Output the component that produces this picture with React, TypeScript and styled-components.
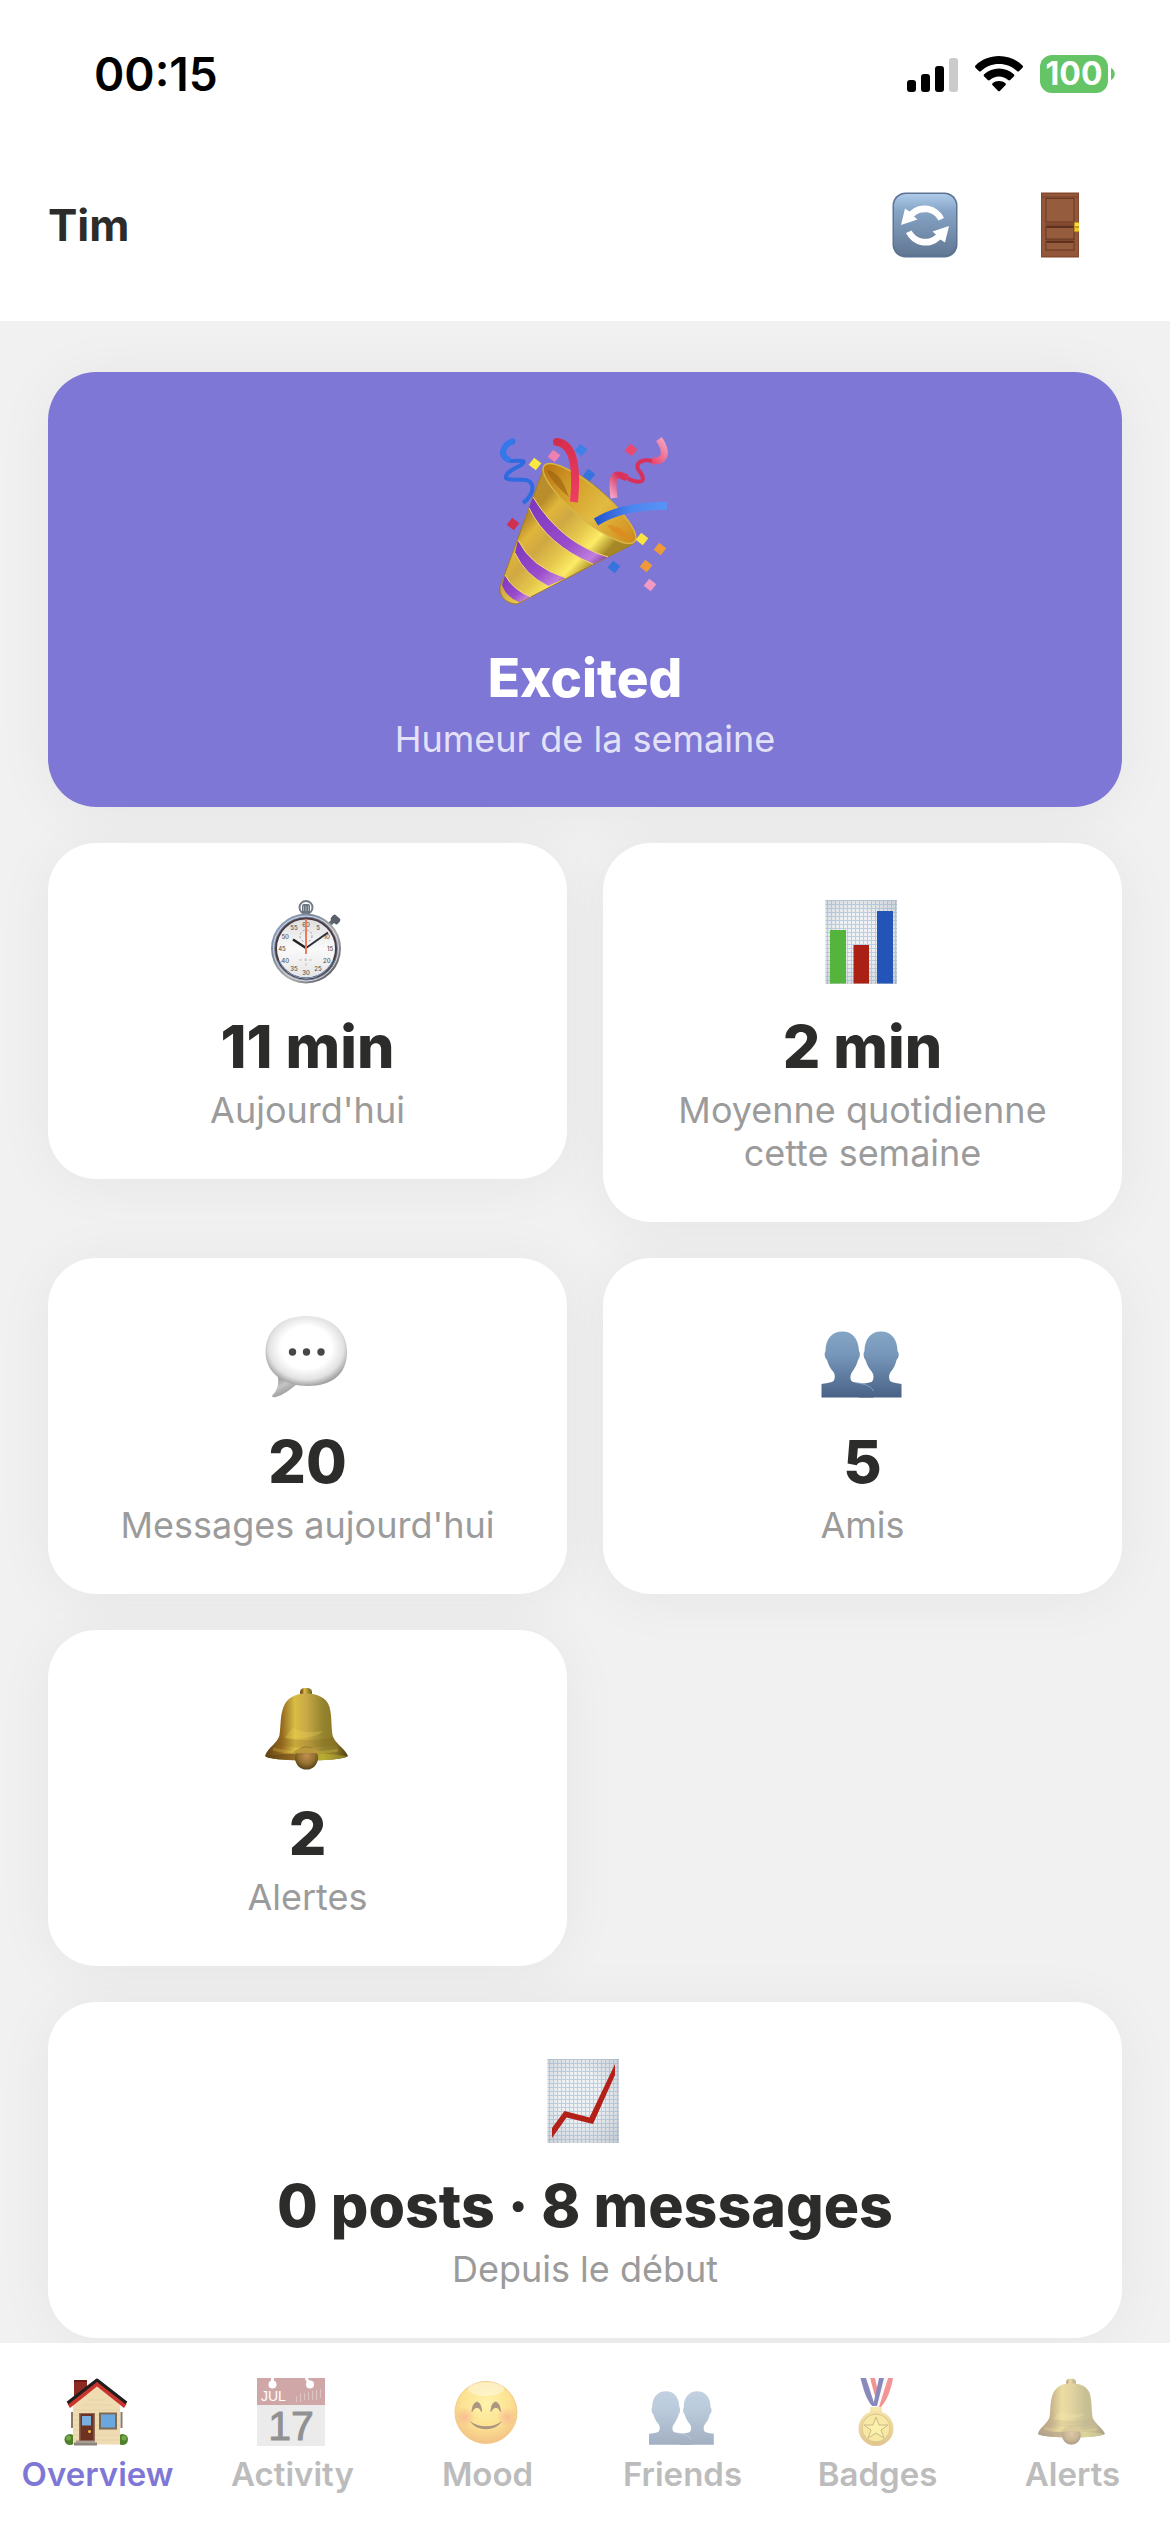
import React from "react";
import styled, { createGlobalStyle } from "styled-components";

type Stat = {
    icon: React.ReactNode;
    value: string;
    label: string;
    wide?: boolean;
};

type Tab = {
    icon: React.ReactNode;
    label: string;
};

const GlobalStyle = createGlobalStyle`
    * {
        box-sizing: border-box;
    }
    body {
        margin: 0;
        background: #f1f1f1;
        color: #2c2c2a;
        font-family: Inter, "Noto Sans", sans-serif;
    }
    h1, h2, p {
        margin: 0;
    }
    svg {
        display: block;
        overflow: visible;
    }
`;

// gradients and patterns used by more than one icon
const SharedDefs: React.FC = () => (
    <HiddenSvg aria-hidden="true">
        <defs>
            <linearGradient id="silhouette" x1="0" y1="0" x2="0" y2="1">
                <stop offset="0" stopColor="#85a5c6" />
                <stop offset="0.35" stopColor="#7797ba" />
                <stop offset="1" stopColor="#486286" />
            </linearGradient>
            <linearGradient id="bellBody" x1="0" y1="0" x2="1" y2="0">
                <stop offset="0" stopColor="#5e4012" />
                <stop offset="0.2" stopColor="#94691f" />
                <stop offset="0.36" stopColor="#d9bd45" />
                <stop offset="0.5" stopColor="#c8a945" />
                <stop offset="0.7" stopColor="#94842e" />
                <stop offset="0.85" stopColor="#8b7726" />
                <stop offset="1" stopColor="#4f3f14" />
            </linearGradient>
            <linearGradient id="bellRim" x1="0" y1="0" x2="1" y2="0">
                <stop offset="0" stopColor="#5f3f16" />
                <stop offset="0.35" stopColor="#8f6b24" />
                <stop offset="0.7" stopColor="#b8ae34" />
                <stop offset="1" stopColor="#8b7a22" />
            </linearGradient>
            <radialGradient id="bellClapper" cx="0.5" cy="0.4" r="0.6">
                <stop offset="0" stopColor="#c08f52" />
                <stop offset="0.6" stopColor="#94702e" />
                <stop offset="1" stopColor="#55401a" />
            </radialGradient>
            <pattern id="graphPaper" width="4" height="4" patternUnits="userSpaceOnUse">
                <rect width="4" height="4" fill="#eef0f1" />
                <path d="M0 0.5H4M0.5 0V4" stroke="#bccfe2" strokeWidth="1" />
            </pattern>
            <radialGradient id="paperShade" cx="0.45" cy="0.45" r="0.75">
                <stop offset="0.4" stopColor="#8a98a8" stopOpacity="0" />
                <stop offset="1" stopColor="#8a98a8" stopOpacity="0.4" />
            </radialGradient>
        </defs>
    </HiddenSvg>
);

const RefreshIcon: React.FC = () => (
    <svg width="66" height="66" viewBox="0 0 66 66" aria-hidden="true">
        <defs>
            <linearGradient id="refreshTile" x1="0" y1="0" x2="0" y2="1">
                <stop offset="0" stopColor="#aecbea" />
                <stop offset="0.28" stopColor="#86a4c6" />
                <stop offset="1" stopColor="#627894" />
            </linearGradient>
        </defs>
        <rect x="0.5" y="0.5" width="65" height="65" rx="13" fill="#5d7391" />
        <rect x="2" y="2" width="62" height="61" rx="12" fill="url(#refreshTile)" />
        <g fill="#fff">
            <path d="M52 26A21.5 21.5 0 0 0 17.5 19.5L13 16.5L9 33L25.500 27.500L22 24.500A15.500 15.500 0 0 1 46.500 28.500Z" />
            <path
                d="M52 26A21.5 21.5 0 0 0 17.5 19.5L13 16.5L9 33L25.500 27.500L22 24.500A15.500 15.500 0 0 1 46.500 28.500Z"
                transform="rotate(180 33 33.5)"
            />
        </g>
    </svg>
);

const DoorIcon: React.FC = () => (
    <svg width="66" height="66" viewBox="0 0 66 66" aria-hidden="true">
        <rect x="14" y="0.5" width="38" height="65" fill="#85492e" />
        <rect x="15" y="2" width="36" height="62" fill="#935739" />
        <g fill="#965c3e" stroke="#6a3822" strokeWidth="1">
            <rect x="19" y="6.500" width="28" height="23.500" />
            <rect x="19" y="34" width="28" height="13" />
            <rect x="19" y="49" width="28" height="9" />
        </g>
        <path d="M15 5H51M18 32H48M18 47.500H48" stroke="#73402a" strokeWidth="1" />
        <path d="M19.500 35H46.500M19.500 50H46.500" stroke="#5e301d" strokeWidth="2" />
        <rect x="47" y="30" width="5" height="10" rx="1" fill="#c9971d" />
        <rect x="48" y="31" width="4" height="3" fill="#f4e04a" />
        <rect x="48" y="36" width="4" height="3" fill="#eacb35" />
    </svg>
);

const confetti = [
    { x: 36, y: 27, fill: "#fbe83c" },
    { x: 55, y: 19, fill: "#ee7fb0" },
    { x: 82, y: 13, fill: "#3f7fe8" },
    { x: 90, y: 38, fill: "#3474dc" },
    { x: 132, y: 13, fill: "#ea4a70" },
    { x: 14, y: 87, fill: "#cf304d" },
    { x: 143, y: 102, fill: "#f9e441" },
    { x: 161, y: 112, fill: "#ef9a3a" },
    { x: 147, y: 129, fill: "#ef9a3a" },
    { x: 115, y: 130, fill: "#3474dc" },
    { x: 151, y: 148, fill: "#f09ac5" },
];

const PartyIcon: React.FC = () => (
    <svg width="172" height="168" viewBox="0 0 172 168" aria-hidden="true">
        <defs>
            <linearGradient id="cone" gradientUnits="userSpaceOnUse" x1="25" y1="85" x2="85" y2="140">
                <stop offset="0" stopColor="#b98d2c" />
                <stop offset="0.15" stopColor="#e0b63a" />
                <stop offset="0.35" stopColor="#d0a843" />
                <stop offset="0.6" stopColor="#e6c84c" />
                <stop offset="0.8" stopColor="#fdec66" />
                <stop offset="1" stopColor="#a58726" />
            </linearGradient>
            <linearGradient id="coneMouth" x1="0" y1="0" x2="1" y2="0">
                <stop offset="0" stopColor="#b97512" />
                <stop offset="0.3" stopColor="#d3a02a" />
                <stop offset="0.6" stopColor="#e2bb42" />
                <stop offset="1" stopColor="#cf8a1c" />
            </linearGradient>
            <linearGradient id="stripe" x1="0" y1="0" x2="1" y2="1">
                <stop offset="0" stopColor="#7a35bd" />
                <stop offset="0.6" stopColor="#9a4ccb" />
                <stop offset="0.85" stopColor="#c07fdc" />
                <stop offset="1" stopColor="#6b2a94" />
            </linearGradient>
            <linearGradient id="redRibbon" x1="0" y1="0" x2="0" y2="1">
                <stop offset="0" stopColor="#d92f4f" />
                <stop offset="1" stopColor="#ef3d63" />
            </linearGradient>
            <linearGradient id="blueRibbon" x1="0" y1="0" x2="1" y2="0">
                <stop offset="0" stopColor="#2455cf" />
                <stop offset="0.5" stopColor="#4c86ef" />
                <stop offset="1" stopColor="#5a93f5" />
            </linearGradient>
            <linearGradient id="pinkRibbon" x1="0" y1="1" x2="1" y2="0">
                <stop offset="0" stopColor="#f3a6c6" />
                <stop offset="0.25" stopColor="#d8305a" />
                <stop offset="0.7" stopColor="#e84a72" />
                <stop offset="1" stopColor="#f5a3c2" />
            </linearGradient>
        </defs>
        <path
            d="M16 4C2 6 -2 22 12 24C24 23 28 24 22 28C14 32 6 36 7 41C14 46 30 38 33 48C35 54 30 62 24 66"
            fill="none"
            stroke="#2f6be0"
            strokeWidth="4"
        />
        <path d="M15 4C3 7 0 20 11 23" fill="none" stroke="#3478ea" strokeWidth="6" />
        <path
            d="M46 28L1 150C0 160 8 167 18 167L134 107C138 104 135 96 130 86C112 56 66 22 46 28Z"
            fill="url(#cone)"
            stroke="#a37b24"
            strokeWidth="1"
        />
        <path d="M34 60Q62 106 109 120L94 127Q48 108 30 71Z" fill="url(#stripe)" />
        <path d="M19 103Q32 130 67 141L49 149Q26 138 16 116Z" fill="url(#stripe)" />
        <path d="M6 138Q14 153 32 160L20 165Q7 160 3 148Z" fill="url(#stripe)" />
        <path
            d="M34 60Q62 106 109 120M30 71Q48 108 94 127M19 103Q32 130 67 141M16 116Q26 138 49 149M6 138Q14 153 32 160"
            fill="none"
            stroke="#f0d97a"
            strokeWidth="1"
        />
        <ellipse
            cx="90.500"
            cy="66.500"
            rx="59"
            ry="16"
            transform="rotate(40 90.5 66.5)"
            fill="url(#coneMouth)"
            stroke="#d9b545"
            strokeWidth="1.500"
        />
        <path d="M50 33C60 37 64 44 70 60C58 50 50 40 48 33Z" fill="#9a5f10" opacity="0.6" />
        <path d="M108 88C118 88 126 94 132 102C124 102 114 96 108 88Z" fill="#e0871f" opacity="0.7" />
        <path d="M57 5C76 6 78 34 75 65" fill="none" stroke="url(#redRibbon)" strokeWidth="8" />
        <circle cx="58" cy="5" r="4" fill="#cf2f4c" />
        <path d="M97 85Q124 68 168 69" fill="none" stroke="url(#blueRibbon)" strokeWidth="8" />
        <path
            d="M154 24C140 21 135 28 141 35C149 46 139 47 128 41"
            fill="none"
            stroke="#d8305a"
            strokeWidth="4"
        />
        <path
            d="M160 2C168 14 168 25 153 24M128 41C112 32 113 44 115 61"
            fill="none"
            stroke="url(#pinkRibbon)"
            strokeWidth="7"
        />
        {confetti.map(({ x, y, fill }) => (
            <rect
                key={`${x}-${y}`}
                x={x - 4.5}
                y={y - 4.5}
                width="9"
                height="9"
                fill={fill}
                transform={`rotate(38 ${x} ${y})`}
            />
        ))}
    </svg>
);

const dialNumbers = [60, 5, 10, 15, 20, 25, 30, 35, 40, 45, 50, 55];

const StopwatchIcon: React.FC = () => (
    <svg width="88" height="84" viewBox="0 0 88 84" aria-hidden="true">
        <defs>
            <linearGradient id="watchCase" x1="0" y1="0" x2="1" y2="1">
                <stop offset="0" stopColor="#9fb4d2" />
                <stop offset="0.3" stopColor="#7d8698" />
                <stop offset="0.6" stopColor="#b3afaa" />
                <stop offset="1" stopColor="#3a3d48" />
            </linearGradient>
            <linearGradient id="watchFace" x1="0" y1="0" x2="0" y2="1">
                <stop offset="0" stopColor="#dedede" />
                <stop offset="0.5" stopColor="#fafafa" />
                <stop offset="1" stopColor="#e4e4e4" />
            </linearGradient>
        </defs>
        <circle cx="42" cy="7.500" r="6.500" fill="none" stroke="#737b86" strokeWidth="2" />
        <rect x="38" y="4" width="8" height="10" rx="2" fill="#6c7480" />
        <path d="M39.500 6V11M42 6V11M44.500 6V11" stroke="#aab2bc" strokeWidth="1" />
        <path d="M66 24L71 19" stroke="#5f6670" strokeWidth="4" />
        <rect x="67" y="16" width="9" height="7" rx="2" fill="#59606a" transform="rotate(42 71.500 19.500)" />
        <circle cx="42" cy="48.500" r="35" fill="url(#watchCase)" />
        <circle cx="42" cy="48.500" r="32.500" fill="none" stroke="#cbdcf4" strokeWidth="1" />
        <circle cx="42" cy="48.500" r="30" fill="url(#watchFace)" stroke="#4a3c44" strokeWidth="2" />
        <path d="M15 60A29 29 0 0 0 69 60" fill="none" stroke="#7ba2d8" strokeWidth="1" />
        {dialNumbers.map((n, i) => {
            const angle = (i * Math.PI) / 6;
            return (
                <DialNumber key={n} x={42 + 24 * Math.sin(angle)} y={50.5 - 24 * Math.cos(angle)}>
                    {n}
                </DialNumber>
            );
        })}
        <circle cx="42" cy="36" r="6" fill="none" stroke="#999" strokeWidth="1" strokeDasharray="2 2" />
        <path d="M35 60H49M42 58V66" stroke="#c4c4c4" strokeWidth="1" strokeDasharray="3 2" />
        <path d="M42 48L29 39.500" stroke="#222" strokeWidth="2.500" />
        <path d="M42 48L64 32.500" stroke="#2a303c" strokeWidth="2" />
        <path d="M42 19V54" stroke="#ee7a5c" strokeWidth="2" />
    </svg>
);

const BarChartIcon: React.FC = () => (
    <svg width="88" height="84" viewBox="0 0 88 84" aria-hidden="true">
        <rect x="6.500" y="0" width="71.500" height="84" fill="url(#graphPaper)" />
        <rect x="6.500" y="0" width="71.500" height="84" fill="url(#paperShade)" />
        <rect x="11" y="30" width="16" height="53.500" fill="#55b43c" />
        <rect x="34.500" y="45" width="15.500" height="38.500" fill="#ab2015" />
        <rect x="58" y="11" width="16" height="72.500" fill="#2355b8" />
    </svg>
);

const LineChartIcon: React.FC = () => (
    <svg width="88" height="84" viewBox="0 0 88 84" aria-hidden="true">
        <rect x="6.500" y="0" width="71.500" height="84" fill="url(#graphPaper)" />
        <rect x="6.500" y="0" width="71.500" height="84" fill="url(#paperShade)" />
        <path
            d="M11 69L23.500 52L48.500 58.500L74 5V16L52 65L25.500 58.500L11 79Z"
            fill="#b32017"
        />
    </svg>
);

const SpeechIcon: React.FC = () => (
    <svg width="88" height="84" viewBox="0 0 88 84" aria-hidden="true">
        <defs>
            <radialGradient id="bubble" cx="0.5" cy="0.45" r="0.56">
                <stop offset="0.55" stopColor="#fff" />
                <stop offset="0.82" stopColor="#e2e2e2" />
                <stop offset="1" stopColor="#9c9c9c" />
            </radialGradient>
            <linearGradient id="bubbleTail" x1="0" y1="0" x2="0.6" y2="1">
                <stop offset="0" stopColor="#7f7f7f" />
                <stop offset="0.5" stopColor="#c4c4c4" />
                <stop offset="1" stopColor="#8d8d8d" />
            </linearGradient>
        </defs>
        <path d="M14 61C15 70 13 76 8.500 80C7 82 9 82.500 12 82C19 80 26 75 33 69Z" fill="url(#bubbleTail)" />
        <path
            d="M42 1C66 1 83 15 83 37C83 59 68 71 44 71C20 71 1.500 58 1.500 37C1.500 15 18 1 42 1Z"
            fill="url(#bubble)"
        />
        <g fill="#474747">
            <circle cx="28.500" cy="37" r="3.700" />
            <circle cx="42.500" cy="37" r="3.700" />
            <circle cx="57" cy="37" r="3.700" />
        </g>
    </svg>
);

const PeopleIcon: React.FC<{ size?: number }> = ({ size = 84 }) => (
    <svg width={(size * 88) / 84} height={size} viewBox="0 0 88 84" aria-hidden="true">
        <path
            d="M62 16.500C72 16.500 78.500 24 78.500 36C80.500 38 80 43 77.500 45C76 52 73 55 71 58C69.500 61 70 64 71 66C74 68 79 68 82.500 69V82.500H40V69C46 68 52 68 53.500 66C55 63 55 60 53 57C50 53 48 50 46.500 45C44.500 43 44 38 45.500 36C45.500 24 52 16.500 62 16.500Z"
            fill="url(#silhouette)"
        />
        <path
            d="M23.500 16.500C33.500 16.500 39.500 24 40 36C41.500 38 41 43 39 45C37.500 51 35 54 32.500 58C31 61 31 64 32.500 66C36 69 49 67 54.500 76V82.500H2.500V69C6 68 12 68 14.500 66C16 64 16.500 60 14.500 57C11 53 9.500 50 8 45C5.500 43 5 38 6.500 36C6.500 24 13 16.500 23.500 16.500Z"
            fill="url(#silhouette)"
        />
        <path d="M38 68C46 69 52 71 54.500 76" fill="none" stroke="#7fa0c4" strokeWidth="1" />
    </svg>
);

const BellIcon: React.FC<{ size?: number }> = ({ size = 84 }) => (
    <svg width={(size * 88) / 84} height={size} viewBox="0 0 88 84" aria-hidden="true">
        <rect x="36" y="1" width="12" height="9" rx="4.500" fill="url(#bellBody)" />
        <path
            d="M42 6.500C54 6.500 63 11 65.500 20C68 29 67 38 68.500 48C70 56 80 60 84 69C80 75 4 75 1 69C4 60 14 56 15.500 48C17 38 16 29 19.500 20C23 11 31 6.500 42 6.500Z"
            fill="url(#bellBody)"
        />
        <path d="M15.500 50C28 54 56 54 69 50L74 57C56 62 28 62 10 57Z" fill="#7a5c18" opacity="0.2" />
        <path d="M21 51C24 46 27 42 30 41C34 45 50 46 60 44C52 51 34 53 21 51Z" fill="#f3e05c" opacity="0.25" />
        <path d="M9 62C26 67 56 67 74 63" fill="none" stroke="#f0d84e" strokeWidth="3" opacity="0.25" />
        <path d="M2 69.500C18 65 66 65 83 69.500C72 75 13 75 2 69.500Z" fill="url(#bellRim)" />
        <circle cx="42.500" cy="71" r="11.500" fill="url(#bellClapper)" />
        <path d="M27 67C36 58 49 58 58 67C50 65.500 35 65.500 27 67Z" fill="#b9993a" />
    </svg>
);

const HouseIcon: React.FC = () => (
    <svg width="71" height="68" viewBox="0 0 71 68" aria-hidden="true">
        <circle cx="8" cy="61.500" r="5.500" fill="#4f7f2a" />
        <circle cx="60.500" cy="61.500" r="5.500" fill="#4f7f2a" />
        <circle cx="6.500" cy="60" r="2.500" fill="#76a848" />
        <circle cx="62" cy="60" r="2.500" fill="#76a848" />
        <rect x="12" y="2" width="13" height="20" fill="#8f2a22" />
        <rect x="12" y="2" width="13" height="2" fill="#6b1c16" />
        <rect x="9" y="34" width="2" height="16" fill="#8c7a66" />
        <rect x="58.500" y="34" width="2" height="16" fill="#8c7a66" />
        <path d="M11 27L35 8L58 27V66.500H11Z" fill="#efdcb2" />
        <path d="M11 32H58M11 37H58M11 42H58M11 47H58M11 52H58M11 57H58M11 62H58M20 27H50M26 22H44" stroke="#e6d2a6" strokeWidth="1" />
        <path d="M5.500 26L35 2L64.500 26L62 30L35 8.500L8 30Z" fill="#c9352d" />
        <path d="M5.500 25L35 2L64.500 25" fill="none" stroke="#1f1d1d" strokeWidth="3" strokeLinejoin="round" />
        <rect x="17" y="35" width="16" height="29" fill="#8c6c55" />
        <rect x="18.500" y="36" width="13" height="28" fill="#6d3222" />
        <rect x="20" y="38" width="9" height="9.500" fill="#79b0e0" />
        <circle cx="27.500" cy="53.500" r="1.500" fill="#f0c23c" />
        <rect x="37" y="34.500" width="18" height="17" fill="#7d6a55" />
        <rect x="39" y="36.500" width="14" height="13" fill="#6ba7df" />
        <rect x="14" y="62.500" width="19" height="2" fill="#a39a90" />
        <rect x="12" y="64.500" width="23" height="3" fill="#8c857d" />
    </svg>
);

const CalendarIcon: React.FC = () => (
    <svg width="71" height="68" viewBox="0 0 71 68" aria-hidden="true">
        <rect x="0" y="0" width="68" height="68" fill="#d8d8d8" />
        <rect x="0" y="0" width="68" height="27" fill="#a25252" />
        <path d="M15.500 0V6M49 0L53 6" stroke="#fff" strokeWidth="3" />
        <circle cx="15.500" cy="6.500" r="4" fill="#fff" />
        <circle cx="53" cy="6.500" r="4" fill="#fff" />
        <CalendarMonth x="4" y="23">JUL</CalendarMonth>
        <path d="M39.500 18V24M43.500 15V24M47.500 15V22M51.500 14V22M55.500 13V22M59.500 12V22M63.500 11V20" stroke="#c18f8f" strokeWidth="1" />
        <CalendarDay x="34" y="62">17</CalendarDay>
    </svg>
);

const SmileIcon: React.FC = () => (
    <svg width="71" height="68" viewBox="0 0 71 68" aria-hidden="true">
        <defs>
            <radialGradient id="smileFace" cx="0.5" cy="0.35" r="0.65">
                <stop offset="0" stopColor="#ffe95c" />
                <stop offset="0.6" stopColor="#fac626" />
                <stop offset="1" stopColor="#e6860e" />
            </radialGradient>
            <radialGradient id="cheek">
                <stop offset="0" stopColor="#f2602a" stopOpacity="0.7" />
                <stop offset="1" stopColor="#f2602a" stopOpacity="0" />
            </radialGradient>
        </defs>
        <circle cx="34" cy="34.500" r="31" fill="url(#smileFace)" stroke="#e8981c" strokeWidth="1" />
        <ellipse cx="34" cy="11" rx="18" ry="7" fill="#fff" opacity="0.4" />
        <circle cx="13" cy="39" r="10" fill="url(#cheek)" />
        <circle cx="55" cy="39" r="10" fill="url(#cheek)" />
        <path d="M20 33.500C21 21 29 21 29.500 33.500C27 28 23 28 20 33.500Z" fill="#5c2f08" stroke="#5c2f08" />
        <path d="M39 33.500C39.500 21 47.500 21 48.500 33.500C46 28 42 28 39 33.500Z" fill="#5c2f08" stroke="#5c2f08" />
        <path d="M18 43C26 50 42 50 50 43C44 54 24 54 18 43Z" fill="#5c2f08" />
    </svg>
);

const MedalIcon: React.FC = () => (
    <svg width="71" height="68" viewBox="0 0 71 68" aria-hidden="true">
        <defs>
            <linearGradient id="medalDisc" x1="0" y1="0" x2="0" y2="1">
                <stop offset="0" stopColor="#ecc94e" />
                <stop offset="1" stopColor="#c88a20" />
            </linearGradient>
        </defs>
        <path d="M28 0H33L36 14L33 26Z" fill="#ea2a2a" />
        <path d="M23 0H28L34 22L32 28H31Z" fill="#fff" />
        <path d="M18.500 0H24L33 28H30C24 21 21 10 18.500 0Z" fill="#16167c" />
        <path d="M46 0H51C49 12 45 22 39 29H36Z" fill="#ea2a2a" />
        <path d="M42 0H46L37 29H33Z" fill="#f4f0f0" />
        <path d="M37 0H42L35 28H31Z" fill="#16167c" />
        <rect x="28" y="29" width="12" height="6" rx="1" fill="#f0d060" />
        <circle cx="34" cy="50.500" r="17.500" fill="url(#medalDisc)" />
        <circle cx="34" cy="50" r="14" fill="#f1d54a" stroke="#b8871e" strokeWidth="1" />
        <path
            d="M34 39L37 47H46L39 52L42 60L34 55L26 60L29 52L22 47H31Z"
            fill="#f8e45c"
            stroke="#9c7218"
            strokeWidth="1"
        />
    </svg>
);

const stats: Stat[] = [
    { icon: <StopwatchIcon />, value: "11 min", label: "Aujourd'hui" },
    { icon: <BarChartIcon />, value: "2 min", label: "Moyenne quotidienne cette semaine" },
    { icon: <SpeechIcon />, value: "20", label: "Messages aujourd'hui" },
    { icon: <PeopleIcon />, value: "5", label: "Amis" },
    { icon: <BellIcon />, value: "2", label: "Alertes" },
    { icon: <LineChartIcon />, value: "0 posts · 8 messages", label: "Depuis le début", wide: true },
];

const tabs: Tab[] = [
    { icon: <HouseIcon />, label: "Overview" },
    { icon: <CalendarIcon />, label: "Activity" },
    { icon: <SmileIcon />, label: "Mood" },
    { icon: <PeopleIcon size={68} />, label: "Friends" },
    { icon: <MedalIcon />, label: "Badges" },
    { icon: <BellIcon size={68} />, label: "Alerts" },
];

const StatusBar: React.FC = () => (
    <StatusWrapper>
        <Time>00:15</Time>
        <StatusIcons>
            <svg width="51" height="36" viewBox="0 0 51 36" aria-label="Signal">
                <rect x="0" y="24" width="9" height="12" rx="3" />
                <rect x="14" y="18" width="9" height="18" rx="3" />
                <rect x="28" y="10" width="9" height="26" rx="3" />
                <rect x="42" y="2" width="9" height="34" rx="3" fill="#cbcbcb" />
            </svg>
            <svg width="48" height="36" viewBox="0 0 48 36" aria-label="Wi-Fi">
                <path d="M24 0C33 0 41.500 3.500 47.500 9.500C48.200 10.200 48.200 11 47.500 11.700L44.200 15C43.500 15.700 42.700 15.700 42 15C37 10.500 31 8 24 8C17 8 11 10.500 6 15C5.300 15.700 4.500 15.700 3.800 15L0.500 11.700C-0.200 11 -0.200 10.200 0.500 9.500C6.500 3.500 15 0 24 0Z" />
                <path d="M24 12.500C29.500 12.500 34.700 14.600 38.800 18.200C39.500 18.900 39.500 19.700 38.800 20.400L35.200 24C34.500 24.700 33.800 24.600 33.100 24C30.500 21.900 27.500 20.600 24 20.600C20.500 20.600 17.500 21.900 14.900 24C14.200 24.600 13.500 24.700 12.800 24L9.200 20.400C8.500 19.700 8.500 18.900 9.200 18.200C13.300 14.600 18.500 12.500 24 12.500Z" />
                <path d="M24 25C26.600 25 28.700 25.900 30.400 27.300C31.100 27.900 31 28.700 30.400 29.300L25.100 34.700C24.400 35.400 23.600 35.400 22.900 34.700L17.600 29.300C17 28.700 16.900 27.900 17.600 27.300C19.300 25.900 21.400 25 24 25Z" />
            </svg>
            <Battery>
                <BatteryLevel>100</BatteryLevel>
                <svg width="4" height="12" viewBox="0 0 4 12" aria-hidden="true">
                    <path d="M0 0C5 2 5 10 0 12Z" fill="#65c466" />
                </svg>
            </Battery>
        </StatusIcons>
    </StatusWrapper>
);

const App: React.FC = () => {
    const [activeTab, setActiveTab] = React.useState("Overview");

    return (
        <Page>
            <GlobalStyle />
            <SharedDefs />
            <Header>
                <StatusBar />
                <TitleBar>
                    <UserName>Tim</UserName>
                    <Actions>
                        <IconButton type="button" aria-label="Refresh">
                            <RefreshIcon />
                        </IconButton>
                        <IconButton type="button" aria-label="Log out">
                            <DoorIcon />
                        </IconButton>
                    </Actions>
                </TitleBar>
            </Header>
            <Content>
                <MoodCard>
                    <PartyIcon />
                    <MoodTitle>Excited</MoodTitle>
                    <MoodLabel>Humeur de la semaine</MoodLabel>
                </MoodCard>
                {stats.map(({ icon, value, label, wide }) => (
                    <StatCard key={label} $wide={wide}>
                        {icon}
                        <StatValue>{value}</StatValue>
                        <StatLabel>{label}</StatLabel>
                    </StatCard>
                ))}
            </Content>
            <TabBar>
                {tabs.map(({ icon, label }) => (
                    <TabButton
                        key={label}
                        type="button"
                        $active={label === activeTab}
                        onClick={() => setActiveTab(label)}
                    >
                        {icon}
                        <span>{label}</span>
                    </TabButton>
                ))}
            </TabBar>
        </Page>
    );
};

const HiddenSvg = styled.svg`
    position: absolute;
    width: 0;
    height: 0;
`;

const DialNumber = styled.text`
    font-size: 6px;
    font-weight: 500;
    text-anchor: middle;
    fill: #555;
`;

const CalendarMonth = styled.text`
    font-family: "Liberation Sans", sans-serif;
    font-size: 14px;
    font-weight: 400;
    fill: #fff;
`;

const CalendarDay = styled.text`
    font-family: "Liberation Sans", sans-serif;
    font-size: 41px;
    font-weight: 400;
    text-anchor: middle;
    fill: #262626;
    stroke: #262626;
`;

const Page = styled.div`
    display: flex;
    flex-direction: column;
    min-height: 100vh;
`;

const Header = styled.header`
    background: #fff;
`;

const StatusWrapper = styled.div`
    display: flex;
    align-items: center;
    justify-content: space-between;
    height: 148px;
    padding: 0 55px 0 94px;
`;

const Time = styled.span`
    font-size: 46px;
    font-weight: 600;
    color: #000;
`;

const StatusIcons = styled.div`
    display: flex;
    align-items: center;
    gap: 17px;
`;

const Battery = styled.div`
    display: flex;
    align-items: center;
    gap: 3px;
`;

const BatteryLevel = styled.span`
    width: 68px;
    border-radius: 12px;
    background: #65c466;
    color: #fff;
    font-size: 32px;
    font-weight: 700;
    line-height: 38px;
    text-align: center;
`;

const TitleBar = styled.div`
    display: flex;
    align-items: center;
    justify-content: space-between;
    padding: 44px 77px 63px 48px;
`;

const UserName = styled.h1`
    font-size: 44px;
    font-weight: 700;
    line-height: 52px;
`;

const Actions = styled.div`
    display: flex;
    gap: 69px;
`;

const IconButton = styled.button`
    padding: 0;
    border: 0;
    background: none;
    cursor: pointer;
`;

const Content = styled.main`
    flex: 1;
    display: grid;
    grid-template-columns: 1fr 1fr;
    align-items: start;
    align-content: start;
    gap: 36px;
    padding: 51px 48px 5px;
`;

const Card = styled.section`
    display: flex;
    flex-direction: column;
    align-items: center;
    border-radius: 48px;
    text-align: center;
    box-shadow: 0 4px 60px rgba(0, 0, 0, 0.05);
`;

const MoodCard = styled(Card)`
    grid-column: 1 / -1;
    padding: 65px 48px 46px;
    background: #7f77d6;
    color: #fff;
`;

const MoodTitle = styled.h2`
    margin: 41px 0 8px;
    font-size: 53px;
    font-weight: 800;
    line-height: 64px;
`;

const MoodLabel = styled.p`
    font-size: 36px;
    line-height: 43px;
    color: rgba(255, 255, 255, 0.8);
`;

const StatCard = styled(Card)<{ $wide?: boolean }>`
    grid-column: ${({ $wide }) => ($wide ? "1 / -1" : "auto")};
    padding: 57px 48px 47px;
    background: #fff;
`;

const StatValue = styled.h2`
    margin: 27px 0 6px;
    font-size: 59px;
    font-weight: 800;
    line-height: 72px;
`;

const StatLabel = styled.p`
    font-size: 36px;
    line-height: 43px;
    color: #9b9b9b;
`;

const TabBar = styled.nav`
    position: sticky;
    bottom: 0;
    display: grid;
    grid-template-columns: repeat(6, 1fr);
    background: #fff;
`;

const TabButton = styled.button<{ $active: boolean }>`
    display: flex;
    flex-direction: column;
    align-items: center;
    gap: 8px;
    padding: 35px 0 38px;
    border: 0;
    background: none;
    color: ${({ $active }) => ($active ? "#7f77d6" : "#bcbcbc")};
    font-family: inherit;
    font-size: 33px;
    font-weight: 600;
    line-height: 40px;
    cursor: pointer;
    svg {
        opacity: ${({ $active }) => ($active ? 1 : 0.5)};
    }
`;

export default App;
